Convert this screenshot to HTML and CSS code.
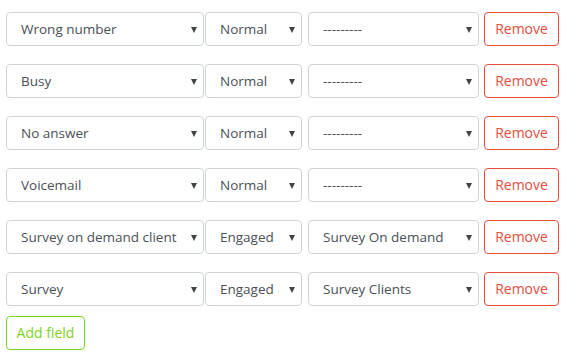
FILE: index.html
```html
<!DOCTYPE html>
<html lang="en">
<head>
    <meta charset="UTF-8">
    <meta name="viewport" content="width=device-width, initial-scale=1.0">
    <title>Fields</title>
    <link rel="stylesheet" href="styles.css">
</head>
<body>
    <div class="fields">
        <div class="field-row">
            <div class="select wide">Wrong number<span class="caret"></span></div>
            <div class="select narrow">Normal<span class="caret"></span></div>
            <div class="select medium">---------<span class="caret"></span></div>
            <a href="#" class="btn btn-remove">Remove</a>
        </div>
        <div class="field-row">
            <div class="select wide">Busy<span class="caret"></span></div>
            <div class="select narrow">Normal<span class="caret"></span></div>
            <div class="select medium">---------<span class="caret"></span></div>
            <a href="#" class="btn btn-remove">Remove</a>
        </div>
        <div class="field-row">
            <div class="select wide">No answer<span class="caret"></span></div>
            <div class="select narrow">Normal<span class="caret"></span></div>
            <div class="select medium">---------<span class="caret"></span></div>
            <a href="#" class="btn btn-remove">Remove</a>
        </div>
        <div class="field-row">
            <div class="select wide">Voicemail<span class="caret"></span></div>
            <div class="select narrow">Normal<span class="caret"></span></div>
            <div class="select medium">---------<span class="caret"></span></div>
            <a href="#" class="btn btn-remove">Remove</a>
        </div>
        <div class="field-row">
            <div class="select wide">Survey on demand client<span class="caret"></span></div>
            <div class="select narrow">Engaged<span class="caret"></span></div>
            <div class="select medium">Survey On demand<span class="caret"></span></div>
            <a href="#" class="btn btn-remove">Remove</a>
        </div>
        <div class="field-row">
            <div class="select wide">Survey<span class="caret"></span></div>
            <div class="select narrow">Engaged<span class="caret"></span></div>
            <div class="select medium">Survey Clients<span class="caret"></span></div>
            <a href="#" class="btn btn-remove">Remove</a>
        </div>

        <a href="#" class="btn btn-add">Add field</a>
    </div>
</body>
</html>
```

FILE: styles.css
```css
* {
    margin: 0;
    padding: 0;
    box-sizing: border-box;
}

body {
    font-family: "Open Sans", Arial, sans-serif;
    font-size: 13.5px;
    background-color: #fff;
    color: #495057;
    padding: 12px 6px;
}

.fields {
    display: flex;
    flex-direction: column;
    align-items: flex-start;
}

.field-row {
    display: flex;
    align-items: center;
    margin-bottom: 18px;
}

.select {
    position: relative;
    height: 34px;
    line-height: 32px;
    border: 1px solid #ced4da;
    border-radius: 4px;
    padding: 0 20px 0 14px;
    white-space: nowrap;
}

.select.wide {
    width: 198px;
    margin-right: 1px;
}

.select.narrow {
    width: 97px;
    margin-right: 6px;
}

.select.medium {
    width: 171px;
    margin-right: 5px;
}

/* Petit triangle du select */
.caret {
    position: absolute;
    right: 6px;
    top: 14px;
    border-left: 3.5px solid transparent;
    border-right: 3.5px solid transparent;
    border-top: 6px solid #444;
}

.btn {
    display: inline-block;
    height: 34px;
    line-height: 32px;
    border-radius: 4px;
    text-decoration: none;
    text-align: center;
    background-color: #fff;
    font-size: 14px;
}

.btn-remove {
    width: 75px;
    border: 1px solid #e74c3c;
    color: #e74c3c;
}

.btn-add {
    width: 79px;
    margin-top: -8px;
    border: 1px solid #7ed321;
    color: #7ed321;
}
```
